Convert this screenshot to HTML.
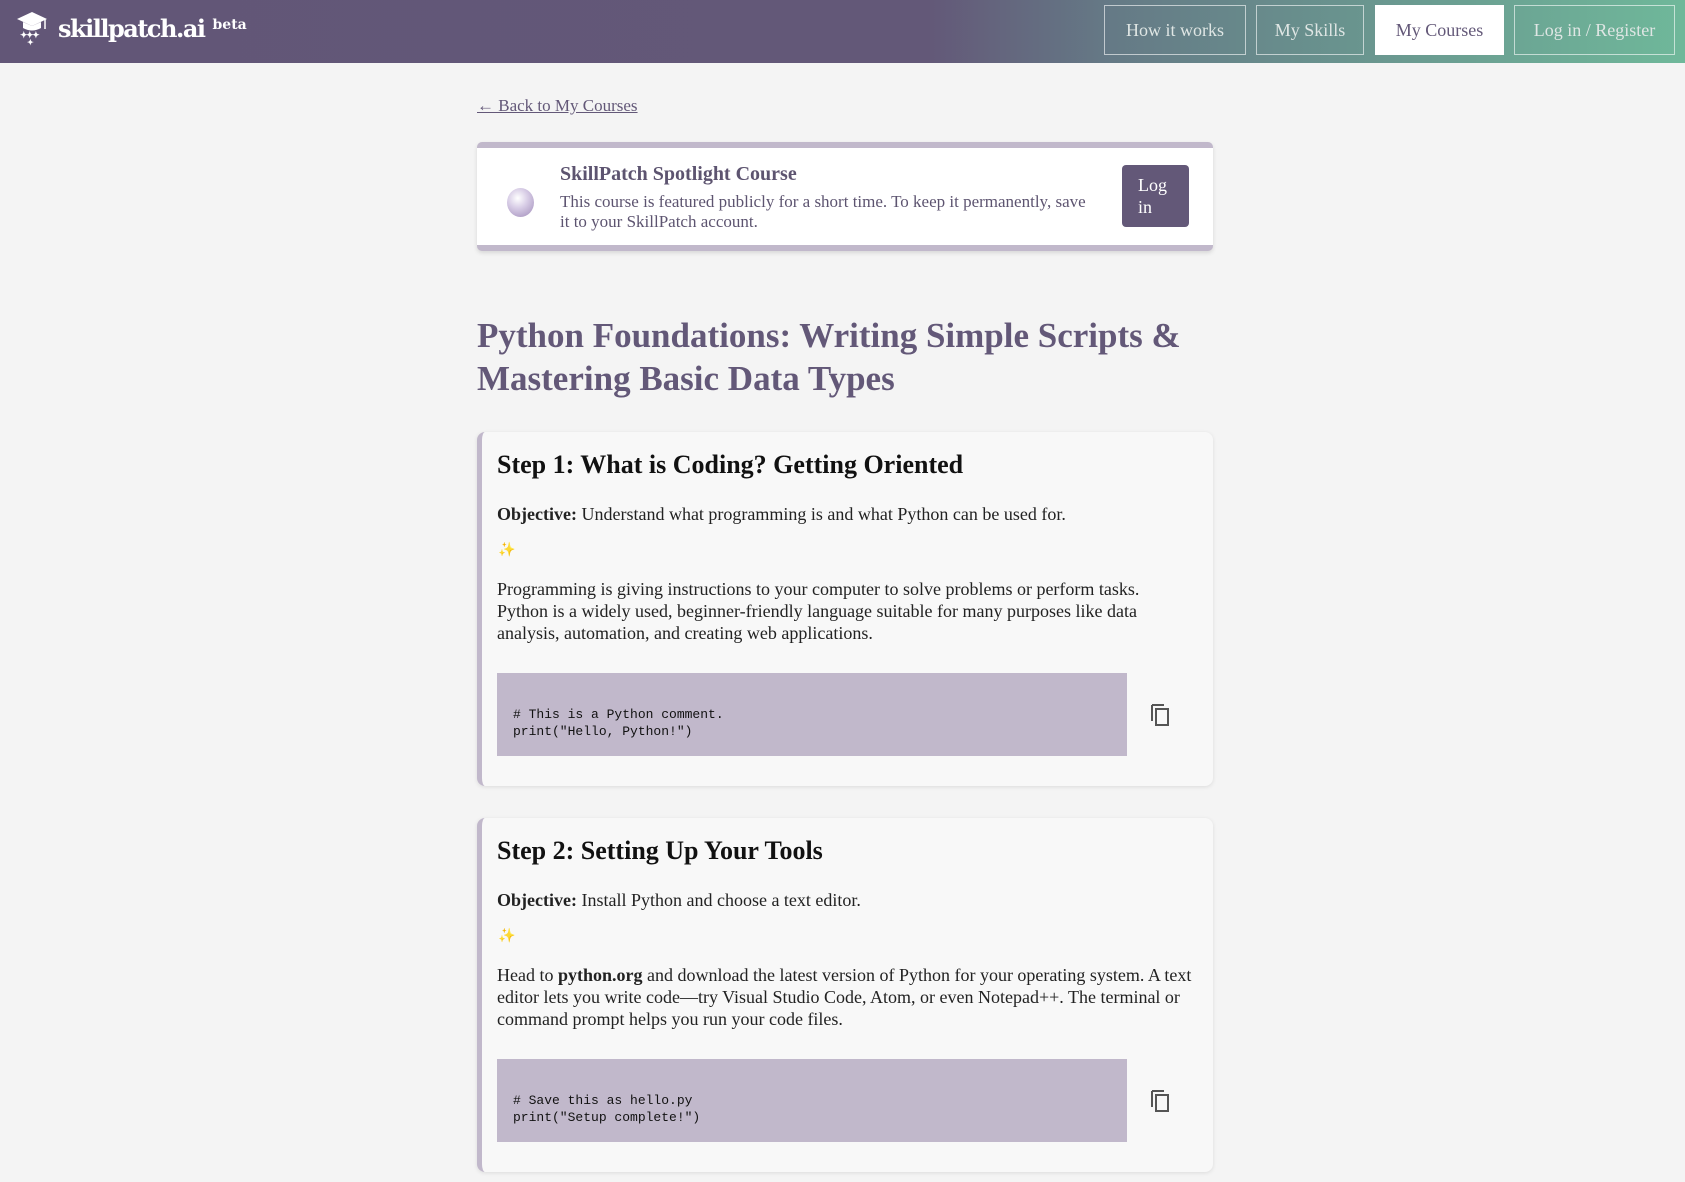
<!DOCTYPE html>
<html><head><meta charset="utf-8"><style>
*{box-sizing:border-box;margin:0;padding:0}
body{width:1685px;height:1182px;overflow:hidden;background:#f4f4f4;font-family:"Liberation Serif",serif;color:#222}
.nav{position:absolute;left:0;top:0;width:1685px;height:63px;background:linear-gradient(90deg,#625677 0%,#635878 55%,#657a86 66%,#6fb89a 100%)}
.logo{position:absolute;left:16px;top:10px;color:#fff;font-family:"DejaVu Serif",serif;font-weight:bold;font-size:24px;letter-spacing:-1.5px;display:flex;align-items:center}
.logo small{font-size:14px;margin-left:8px;margin-top:-6px;letter-spacing:0}
.nb{position:absolute;top:5px;height:50px;border:1px solid rgba(255,255,255,.6);color:#dfe6e4;font-size:18px;display:flex;align-items:center;justify-content:center}
.nb.act{background:#fff;color:#635878}
.wrap{position:absolute;left:477px;width:736px}
a{color:#635878}
.spot{position:absolute;left:477px;top:142px;width:736px;height:109px;background:#fff;border-top:6px solid #c1b8cb;border-bottom:6px solid #c1b8cb;border-radius:5px;box-shadow:0 2px 4px rgba(0,0,0,.12)}
.orb{position:absolute;left:30px;top:40px;width:27px;height:29px;border-radius:50%;background:radial-gradient(circle at 40% 35%,#fff 0%,#d8cde6 40%,#9e8ab8 100%)}
.spot h3{position:absolute;left:83px;top:15px;font-size:20px;color:#5d5470;font-weight:bold}
.spot p{position:absolute;left:83px;top:44px;width:528px;font-size:17px;line-height:20px;color:#5d5470}
.lbtn{position:absolute;right:24px;top:17px;width:67px;height:62px;background:#635878;color:#fff;border-radius:4px;font-size:18px;line-height:22px;padding:9px 16px}
h1{position:absolute;left:477px;top:314px;width:760px;font-size:35px;line-height:43px;color:#635878;font-weight:bold}
.card{position:absolute;left:477px;width:736px;height:354px;background:#f8f8f8;border-left:5px solid #c1b8cb;border-radius:8px;box-shadow:0 1px 4px rgba(0,0,0,.1)}
.card h2{position:absolute;left:15px;top:18px;font-size:26px;font-weight:bold;color:#111}
.obj{position:absolute;left:15px;top:72px;font-size:18px}
.spark{position:absolute;left:16px;top:110px;font-size:14px;color:#e0a060}
.txt{position:absolute;left:15px;top:146px;width:695px;font-size:18px;line-height:22px}
.code{position:absolute;left:15px;top:241px;width:630px;height:83px;background:#c1b8cb;font-family:"Liberation Mono",monospace;font-size:13px;line-height:17px;padding:33px 16px 0;white-space:pre;color:#111}
.copy{position:absolute;left:667px;top:270px}
</style></head><body>
<div class="nav">
 <div class="logo"><svg width="32" height="36" viewBox="0 0 32 36"><path d="M16 2 L31 9 L16 16 L1 9Z" fill="#fff"/><path d="M7 12 v6 q9 5 18 0 v-6 l-9 4z" fill="#fff"/><line x1="29" y1="9" x2="29" y2="19" stroke="#fff" stroke-width="1.5"/><text x="4" y="28" fill="#fff" font-size="9">✦✦✦</text><text x="11" y="35" fill="#fff" font-size="8">✦</text></svg><span style="margin-left:10px">skillpatch.ai</span><small>beta</small></div>
 <div class="nb" style="left:1104px;width:142px">How it works</div>
 <div class="nb" style="left:1256px;width:108px">My Skills</div>
 <div class="nb act" style="left:1375px;width:129px">My Courses</div>
 <div class="nb" style="left:1514px;width:161px">Log in / Register</div>
</div>
<div class="wrap" style="top:96px;font-size:17px"><a href="#">← Back to My Courses</a></div>
<div class="spot"><div class="orb"></div><h3>SkillPatch Spotlight Course</h3><p>This course is featured publicly for a short time. To keep it permanently, save it to your SkillPatch account.</p><div class="lbtn">Log in</div></div>
<h1>Python Foundations: Writing Simple Scripts &amp; Mastering Basic Data Types</h1>
<div class="card" style="top:432px">
 <h2>Step 1: What is Coding? Getting Oriented</h2>
 <div class="obj"><b>Objective:</b> Understand what programming is and what Python can be used for.</div>
 <div class="spark">✨</div>
 <div class="txt">Programming is giving instructions to your computer to solve problems or perform tasks. Python is a widely used, beginner-friendly language suitable for many purposes like data analysis, automation, and creating web applications.</div>
 <div class="code"># This is a Python comment.
print("Hello, Python!")</div>
 <svg class="copy" width="24" height="26" viewBox="0 0 24 26"><path d="M3 3 h12 M3 3 v16" stroke="#555" stroke-width="2" fill="none"/><rect x="7" y="7" width="12" height="16" stroke="#555" stroke-width="2" fill="none"/></svg>
</div>
<div class="card" style="top:818px">
 <h2>Step 2: Setting Up Your Tools</h2>
 <div class="obj"><b>Objective:</b> Install Python and choose a text editor.</div>
 <div class="spark">✨</div>
 <div class="txt">Head to <b>python.org</b> and download the latest version of Python for your operating system. A text editor lets you write code—try Visual Studio Code, Atom, or even Notepad++. The terminal or command prompt helps you run your code files.</div>
 <div class="code"># Save this as hello.py
print("Setup complete!")</div>
 <svg class="copy" width="24" height="26" viewBox="0 0 24 26"><path d="M3 3 h12 M3 3 v16" stroke="#555" stroke-width="2" fill="none"/><rect x="7" y="7" width="12" height="16" stroke="#555" stroke-width="2" fill="none"/></svg>
</div>
</body></html>
